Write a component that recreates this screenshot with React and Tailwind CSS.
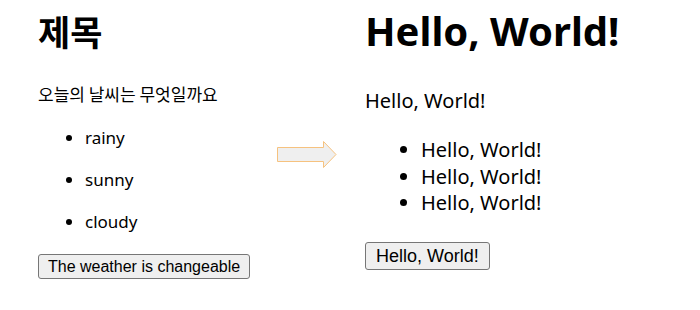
import React from 'react';

const Arrow = () => (
  <svg width="60" height="27" viewBox="0 0 60 27" className="shrink-0">
    <path
      d="M0.5 6.5 H46.5 V0.5 L59 13.5 L46.5 26.5 V20.5 H0.5 Z"
      fill="#efefef"
      stroke="#f6c27f"
      strokeWidth="1"
    />
  </svg>
);

const App = () => {
  const weather = ['rainy', 'sunny', 'cloudy'];

  return (
    <div className="w-[700px] h-[310px] bg-white flex text-black font-['Noto_Sans','Noto_Sans_CJK_KR',sans-serif]">
      {/* before */}
      <div className="w-[277px] pl-[38px] shrink-0">
        <h1 className="text-[35px] font-bold leading-[40px] mt-[11px] font-['Noto_Sans_CJK_KR',sans-serif]">제목</h1>
        <p className="text-[17px] leading-[22px] mt-[32px] font-['Noto_Sans_CJK_KR',sans-serif]">오늘의 날씨는 무엇일까요</p>
        <ul className="list-disc pl-[47px] mt-[22px] text-[17px] leading-[22px] flex flex-col gap-[20px]">
          {weather.map((w) => (
            <li key={w}>{w}</li>
          ))}
        </ul>
        <button className="mt-[21px] h-[25px] px-[9px] text-[16px] leading-none font-['Liberation_Sans',Arial,sans-serif] bg-[#efefef] border border-[#767676] rounded-[3px]">
          The weather is changeable
        </button>
      </div>

      <div className="pt-[141px]">
        <Arrow />
      </div>

      {/* after */}
      <div className="ml-[28px]">
        <h1 className="text-[40px] font-bold leading-[52px] mt-[5px]">Hello, World!</h1>
        <p className="text-[20px] leading-[26px] mt-[31px]">Hello, World!</p>
        <ul className="list-disc pl-[56px] mt-[23px] text-[20px] leading-[26.5px]">
          {[0, 1, 2].map((i) => (
            <li key={i}>Hello, World!</li>
          ))}
        </ul>
        <button className="mt-[25px] h-[28px] px-[10px] text-[18px] leading-none font-['Liberation_Sans',Arial,sans-serif] bg-[#efefef] border border-[#767676] rounded-[3px]">
          Hello, World!
        </button>
      </div>
    </div>
  );
};

export default App;
